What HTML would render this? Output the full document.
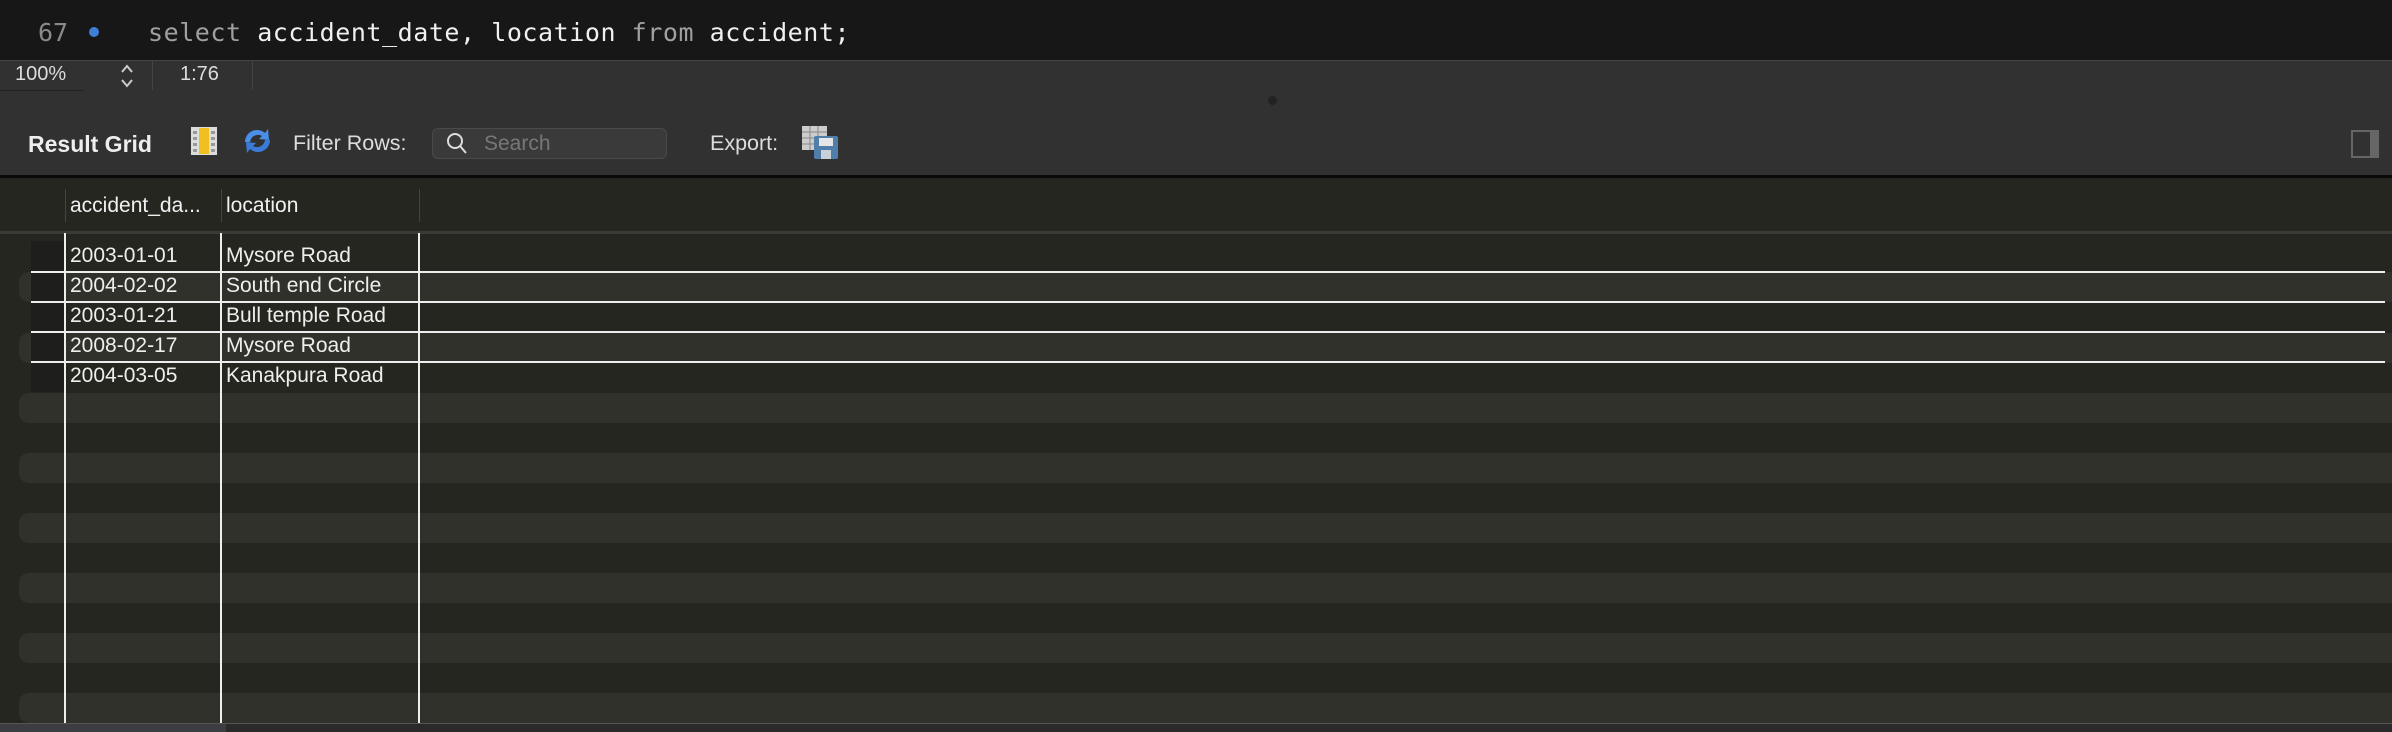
<!DOCTYPE html>
<html><head><style>
*{margin:0;padding:0;box-sizing:border-box}
body{width:2392px;height:732px;background:#262620;position:relative;overflow:hidden;font-family:"Liberation Sans",sans-serif;color:#e8e8e8}
.a{position:absolute}
.mono{font-family:"DejaVu Sans Mono","Liberation Mono",monospace}
</style></head><body>
<div class="a" style="left:0;top:0;width:2392px;height:60px;background:#171717"></div>
<div class="a mono" style="left:38px;top:18px;font-size:25px;color:#8a8a8a">67</div>
<div class="a" style="left:89px;top:27px;width:10px;height:10px;border-radius:50%;background:#3f7fd6"></div>
<div class="a mono" style="left:148px;top:18px;font-size:25px;color:#f0f0f0;white-space:pre;letter-spacing:0.55px"><span style="color:#a0a0a0">select</span> accident_date, location <span style="color:#a0a0a0">from</span> accident;</div>
<div class="a" style="left:0;top:60px;width:2392px;height:117px;background:#313132;border-top:1px solid #444"></div>
<div class="a" style="left:15px;top:63px;font-size:20px;color:#ddd">100%</div>
<svg class="a" style="left:119px;top:62px" width="16" height="28"><path d="M3 10 L8 4 L13 10 M3 18 L8 24 L13 18" stroke="#ccc" stroke-width="2" fill="none"/></svg>
<div class="a" style="left:0;top:90px;width:84px;height:1px;background:#222"></div>
<div class="a" style="left:152px;top:61px;width:1px;height:29px;background:#444"></div>
<div class="a" style="left:180px;top:63px;font-size:20px;color:#ddd">1:76</div>
<div class="a" style="left:252px;top:61px;width:1px;height:29px;background:#444"></div>
<div class="a" style="left:1268px;top:96px;width:9px;height:9px;border-radius:50%;background:#222"></div>
<div class="a" style="left:28px;top:131px;font-size:23px;font-weight:bold;color:#eee">Result Grid</div>
<svg class="a" style="left:190px;top:126px" width="28" height="30"><rect x="1" y="1" width="26" height="28" fill="#ddd"/><rect x="9" y="2" width="10" height="26" fill="#f0c020"/><g fill="#999"><rect x="3" y="5" width="4" height="3"/><rect x="3" y="11" width="4" height="3"/><rect x="3" y="17" width="4" height="3"/><rect x="3" y="23" width="4" height="3"/><rect x="21" y="5" width="4" height="3"/><rect x="21" y="11" width="4" height="3"/><rect x="21" y="17" width="4" height="3"/><rect x="21" y="23" width="4" height="3"/></g></svg>
<svg class="a" style="left:241px;top:126px" width="33" height="30"><path d="M4 16 A12 12 0 0 1 24 7 L27 3 L28 14 L18 13 L21 10 A8 8 0 0 0 9 16 Z" fill="#4a8ee8"/><path d="M29 14 A12 12 0 0 1 9 23 L6 27 L5 16 L15 17 L12 20 A8 8 0 0 0 24 14 Z" fill="#3a7ad8"/></svg>
<div class="a" style="left:293px;top:131px;font-size:21.5px;color:#ddd">Filter Rows:</div>
<div class="a" style="left:432px;top:128px;width:235px;height:31px;border:1px solid #4a4a4a;border-radius:6px;background:#3a3a3a"></div>
<svg class="a" style="left:446px;top:131px" width="22" height="24"><circle cx="9" cy="10" r="7" stroke="#ddd" stroke-width="2" fill="none"/><path d="M14 15 L20 22" stroke="#ddd" stroke-width="2"/></svg>
<div class="a" style="left:484px;top:132px;font-size:21px;color:#777">Search</div>
<div class="a" style="left:710px;top:131px;font-size:21.5px;color:#ddd">Export:</div>
<svg class="a" style="left:801px;top:125px" width="38" height="34"><rect x="1" y="1" width="25" height="24" fill="#ccc"/><g stroke="#888" stroke-width="1"><path d="M1 7H26M1 13H26M1 19H26M9 1V25M17 1V25"/></g><rect x="13" y="11" width="24" height="23" fill="#4f7eaa" rx="2"/><rect x="18" y="13" width="14" height="8" fill="#e6e6e6"/><rect x="20" y="25" width="10" height="9" fill="#c8d0d8"/></svg>
<div class="a" style="left:2351px;top:130px;width:28px;height:28px;border:2px solid #666;border-right:9px solid #666"></div>
<div class="a" style="left:0;top:175px;width:2392px;height:3px;background:#0a0a0a"></div>
<div class="a" style="left:0;top:178px;width:2392px;height:53px;background:#262621"></div>
<div class="a" style="left:0;top:231px;width:2392px;height:3px;background:#3a3a36"></div>
<div class="a" style="left:65px;top:189px;width:1px;height:33px;background:#444"></div>
<div class="a" style="left:221px;top:189px;width:1px;height:33px;background:#444"></div>
<div class="a" style="left:419px;top:189px;width:1px;height:33px;background:#444"></div>
<div class="a" style="left:70px;top:194px;font-size:21px;color:#f0f0f0">accident_da...</div>
<div class="a" style="left:226px;top:194px;font-size:21px;color:#f0f0f0">location</div>
<div class="a" style="left:0;top:234px;width:2392px;height:498px;background:#262620"></div>
<div class="a" style="left:19px;top:272px;width:2373px;height:30px;background:#31312b;border-radius:10px 0 0 10px"></div>
<div class="a" style="left:19px;top:333px;width:2373px;height:30px;background:#31312b;border-radius:10px 0 0 10px"></div>
<div class="a" style="left:19px;top:393px;width:2373px;height:30px;background:#31312b;border-radius:10px 0 0 10px"></div>
<div class="a" style="left:19px;top:453px;width:2373px;height:30px;background:#31312b;border-radius:10px 0 0 10px"></div>
<div class="a" style="left:19px;top:513px;width:2373px;height:30px;background:#31312b;border-radius:10px 0 0 10px"></div>
<div class="a" style="left:19px;top:573px;width:2373px;height:30px;background:#31312b;border-radius:10px 0 0 10px"></div>
<div class="a" style="left:19px;top:633px;width:2373px;height:30px;background:#31312b;border-radius:10px 0 0 10px"></div>
<div class="a" style="left:19px;top:693px;width:2373px;height:30px;background:#31312b;border-radius:10px 0 0 10px"></div>
<div class="a" style="left:31px;top:241px;width:34px;height:151px;background:#1e1e1c"></div>
<div class="a" style="left:31px;top:271px;width:2354px;height:2px;background:#eee"></div>
<div class="a" style="left:31px;top:301px;width:2354px;height:2px;background:#eee"></div>
<div class="a" style="left:31px;top:331px;width:2354px;height:2px;background:#eee"></div>
<div class="a" style="left:31px;top:361px;width:2354px;height:2px;background:#eee"></div>
<div class="a" style="left:64px;top:233px;width:2px;height:490px;background:#eee"></div>
<div class="a" style="left:220px;top:233px;width:2px;height:490px;background:#eee"></div>
<div class="a" style="left:418px;top:233px;width:2px;height:490px;background:#eee"></div>
<div class="a" style="left:70px;top:241px;font-size:21px;line-height:30px;color:#eee">2003-01-01<br>2004-02-02<br>2003-01-21<br>2008-02-17<br>2004-03-05</div>
<div class="a" style="left:226px;top:241px;font-size:21px;line-height:30px;color:#eee">Mysore Road<br>South end Circle<br>Bull temple Road<br>Mysore Road<br>Kanakpura Road</div>
<div class="a" style="left:0;top:723px;width:2392px;height:9px;background:#2a2a2a;border-top:1px solid #555"></div>
<div class="a" style="left:0;top:724px;width:226px;height:8px;background:#3c3d40"></div>
</body></html>
